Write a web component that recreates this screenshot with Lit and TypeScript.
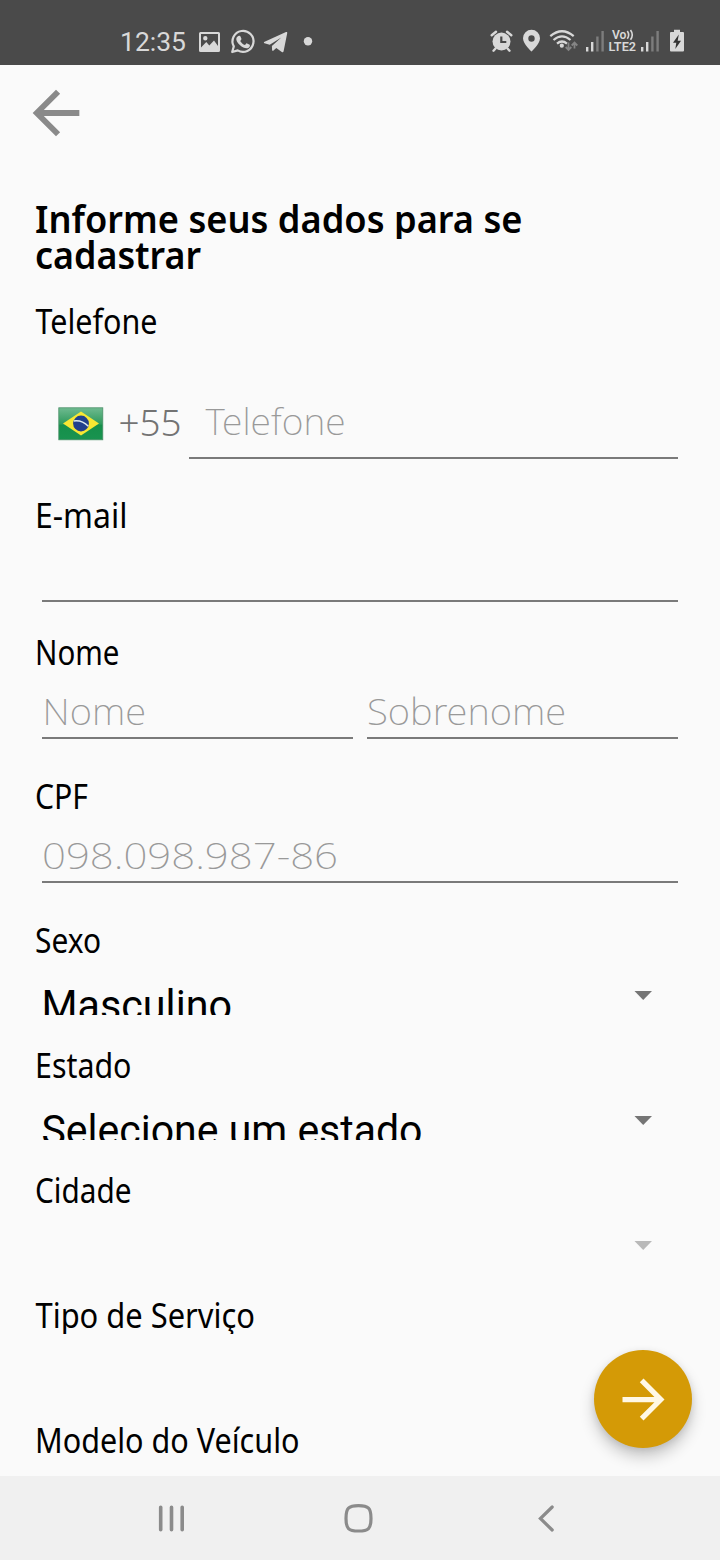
import { LitElement, html, svg, css, nothing } from "lit";
import { customElement, property } from "lit/decorators.js";

/** A single line of text fitted to a fixed advance width. */
@customElement("fit-line")
export class FitLine extends LitElement {
  @property() text = "";
  @property() kind = "label";
  @property({ type: Number }) x = 0;
  @property({ type: Number }) base = 30;
  @property({ type: Number }) height = 36;
  @property({ type: Number }) length = 0;
  @property({ type: Boolean }) clip = false;

  static styles = css`
    :host { display: block; }
    svg { display: block; width: 100%; overflow: visible; }
    svg.clip { overflow: hidden; }
    text { font-family: "Noto Sans", "Open Sans", sans-serif; }
    .title { font-size: 38.5px; font-weight: 560; fill: #000; }
    .label { font-size: 34px; font-weight: 380; fill: #000; }
    .hint { font-size: 37.5px; font-weight: 240; fill: #999; }
    .code { font-size: 37.5px; font-weight: 270; fill: #737373; }
    .value { font-family: Roboto, sans-serif; font-size: 42px; font-weight: 400; fill: #000; }
  `;

  render() {
    return html`<svg class=${this.clip ? "clip" : ""} height=${this.height}>
      <text class=${this.kind} x=${this.x} y=${this.base} textLength=${this.length} lengthAdjust="spacingAndGlyphs">${this.text}</text>
    </svg>`;
  }
}

@customElement("status-bar")
export class StatusBar extends LitElement {
  static styles = css`
    :host { display: flex; justify-content: space-between; height: 65px; background: #4a4a4a; }
    svg { display: block; }
    .ink { fill: #d8d8d8; }
    .dim { fill: #7d7d7d; }
    .line { fill: none; stroke: #d8d8d8; }
    .dark { fill: #333; }
    .clock { font: 400 26px Roboto, sans-serif; fill: #d8d8d8; }
    .net { font: 600 12.5px Roboto, sans-serif; fill: #d8d8d8; }
  `;

  private bars(x: number) {
    return svg`
      <rect class="ink" x=${x} y="47" width="2.4" height="4.500"/>
      <rect class="ink" x=${x + 5} y="42" width="2.4" height="9.500"/>
      <rect class="dim" x=${x + 10.2} y="36.500" width="2.4" height="15"/>
      <rect class="dim" x=${x + 15.4} y="31" width="2.4" height="20.500"/>`;
  }

  render() {
    return html`
      <svg width="340" height="65" viewBox="0 0 340 65">
        <text class="clock" x="120" y="51" textLength="66" lengthAdjust="spacingAndGlyphs">12:35</text>
        <path class="ink" fill-rule="evenodd" d="M200.500 32H218.500a1.500 1.500 0 0 1 1.500 1.500V50.500a1.500 1.500 0 0 1-1.500 1.500H200.500a1.500 1.500 0 0 1-1.500-1.500V33.500a1.500 1.500 0 0 1 1.500-1.500ZM201 34V47.500L206.300 42L209.300 45.500L214 40.500L218 46V34ZM205.300 36a2.200 2.200 0 1 1 0 4.400a2.200 2.200 0 0 1 0-4.400Z"/>
        <path class="line" stroke-width="2.200" stroke-linejoin="round" d="M232.200 52L233.800 46.400A10.500 10.500 0 1 1 237.700 50.400Z"/>
        <path class="ink" d="M239.200 35.700c.7 0 1 .1 1.300.8l.9 2.200c.2.500-.1.900-1.200 2.200c1.200 2 2.700 3.300 4.800 4.200c1.300-1.600 1.500-2 2.100-1.700l2.600 1.300c.5.300.3 3-2.200 3.500c-2 .5-5-.7-7.700-3.200c-2.700-2.500-3.700-4.700-3.500-6.300c.200-1.600 1.600-3 2.900-3Z"/>
        <path class="ink" d="M264.500 43.200c-.9-.4-.8-1.100.1-1.500L286 32.100c.9-.3 1.400.1 1.200 1.200l-3.600 17.900c-.3 1.200-1 1.300-1.800.7l-5.500-4l-2.800 2.700c-.5.500-1.400.4-1.400-.5l-.2-4.100l9.400-8.500l-11.600 7.300Z"/>
        <circle class="ink" cx="308" cy="41.300" r="4.200"/>
      </svg>
      <svg width="240" height="65" viewBox="480 0 240 65">
        <circle class="ink" cx="501.500" cy="41.500" r="9"/>
        <path class="line" stroke-width="2.400" stroke-linecap="round" d="M491.700 35.200L496 31.700M511.300 35.200L507 31.700M495.500 48.500L493.500 50.700M507.500 48.500L509.500 50.700"/>
        <path fill="none" stroke="#4a4a4a" stroke-width="2.200" d="M501.300 36.500V42H506.300"/>
        <path class="ink" fill-rule="evenodd" d="M531.500 29.800a8.500 8.500 0 0 1 8.500 8.500c0 6-8.500 13.200-8.500 13.200s-8.500-7.200-8.500-13.200a8.500 8.500 0 0 1 8.500-8.500Zm0 5.500a3.200 3.200 0 1 0 0 6.400a3.200 3.200 0 0 0 0-6.400Z"/>
        <path class="line" stroke-width="2.200" d="M550.300 36.200Q562 26.300 573.700 36.200M553.500 40Q562 32.600 570.500 40M557 43.600Q562 39.400 567 43.600"/>
        <circle class="ink" cx="561.800" cy="45.700" r="2.100"/>
        <path fill="none" stroke="#858585" stroke-width="1.800" d="M568.500 42.500V49.700M565.700 47L568.500 49.900L571.300 47M574.500 48.500V42.700M571.700 45.500L574.500 42.600L577.300 45.500"/>
        ${this.bars(586)}
        <text class="net" x="612" y="39" textLength="14.500" lengthAdjust="spacingAndGlyphs">Vo</text>
        <path class="line" stroke-width="1.600" d="M627.300 31Q630 34.800 627.300 38.800M630.500 30Q634 34.800 630.500 39.800"/>
        <text class="net" x="608.500" y="51.200" textLength="27.500" lengthAdjust="spacingAndGlyphs">LTE2</text>
        ${this.bars(641)}
        <path class="ink" d="M674 29.800H680V32H683a1 1 0 0 1 1 1V50.500a1 1 0 0 1-1 1H671a1 1 0 0 1-1-1V33a1 1 0 0 1 1-1H674Z"/>
        <path class="dark" d="M678.800 34.500L673 42.800H676.300L675.300 49L681 40.800H677.700Z"/>
      </svg>`;
  }
}

@customElement("app-root")
export class AppRoot extends LitElement {
  static styles = css`
    :host { display: block; position: relative; width: 720px; height: 1560px; overflow: hidden; background: #fafafa; }
    .screen { display: flex; flex-direction: column; height: 1560px; }
    svg { display: block; }
    .bar { height: 131px; box-sizing: border-box; padding: 13px 0 0 21px; }
    .form { flex: 1; min-height: 0; }
    .title { padding-bottom: 29px; }
    .phone { display: flex; height: 119px; margin-bottom: 39px; }
    .flag { padding: 67px 0 0 58px; }
    .code { width: 85px; padding-top: 66px; }
    .field { box-sizing: border-box; border-bottom: 2px solid #7a7a7a; }
    .tel { width: 489px; padding-top: 65px; }
    .email { height: 68px; margin: 0 42px 33px; }
    .names { display: flex; gap: 14px; margin: 0 42px 40px; }
    .names .field { flex: 1; }
    .short { height: 68px; padding-top: 20px; }
    .cpf { margin: 0 42px 40px; }
    .spinner { display: flex; height: 56px; margin-bottom: 33px; overflow: hidden; }
    .value { width: 634px; padding-top: 20px; }
    .caret { margin-top: 32.300px; fill: #757575; }
    .off { fill: #b9b9b9; }
    .nav { height: 84px; background: #f0f0f0; }
    .fab { position: absolute; left: 594px; top: 1350px; width: 98px; height: 98px; border-radius: 50%; background: #d49a06; display: grid; place-items: center; box-shadow: 0 9px 15px rgba(0, 0, 0, .2), 0 2px 7px rgba(0, 0, 0, .1); }
  `;

  private label(text: string, x: number, length: number, clip = false) {
    return html`<fit-line text=${text} .x=${x} .length=${length} .clip=${clip}></fit-line>`;
  }

  private spinner(value: string, length: number, caret: "on" | "off" | "none") {
    return html`<div class="spinner">
      <div class="value">${value
        ? html`<fit-line kind="value" text=${value} .x=${41.5} .base=${41.3} .height=${60} .length=${length}></fit-line>`
        : nothing}</div>
      ${caret === "none"
        ? nothing
        : html`<svg class="caret ${caret}" width="18" height="9"><path d="M.5 0H18L9.200 9Z"/></svg>`}
    </div>`;
  }

  render() {
    return html`
      <div class="screen">
        <status-bar></status-bar>
        <div class="form">
          <div class="bar">
            <svg width="70" height="70" viewBox="0 0 24 24"><path fill="#8a8a8a" d="M20 11H7.830l5.590-5.590L12 4l-8 8 8 8 1.410-1.410L7.830 13H20v-2z"/></svg>
          </div>
          <div class="title">
            <fit-line kind="title" text="Informe seus dados para se" .x=${35} .base=${37} .height=${43} .length=${487.5} .clip=${true}></fit-line>
            <fit-line kind="title" text="cadastrar" .x=${35} .base=${30} .length=${166}></fit-line>
          </div>
          ${this.label("Telefone", 35.5, 122)}
          <div class="phone">
            <div class="flag">
              <svg width="46" height="34" viewBox="0 0 46 34">
                <defs>
                  <linearGradient id="green" x1="0" y1="0" x2="0" y2="1">
                    <stop offset="0" stop-color="#6fba90"/><stop offset=".5" stop-color="#2f9a5c"/><stop offset=".55" stop-color="#158f4a"/><stop offset="1" stop-color="#199350"/>
                  </linearGradient>
                </defs>
                <rect x=".8" y=".8" width="44" height="32" fill="url(#green)" stroke="#4a8f68" stroke-width=".8"/>
                <path fill="#f7e733" d="M23 4.500L41 16.500L23 28.500L5 16.500Z"/>
                <circle cx="23" cy="16.500" r="7.900" fill="#22408c"/>
                <path fill="none" stroke="#dce8ee" stroke-width="1.500" d="M15.700 14Q24 12.800 30.300 19.300"/>
              </svg>
            </div>
            <div class="code"><fit-line kind="code" text="+55" .x=${14.5} .length=${63} .height=${40}></fit-line></div>
            <div class="field tel"><fit-line kind="hint" text="Telefone" .x=${16.5} .length=${140} .height=${40}></fit-line></div>
          </div>
          ${this.label("E-mail", 35, 92.5)}
          <div class="field email"></div>
          ${this.label("Nome", 35, 84.5)}
          <div class="names">
            <div class="field short"><fit-line kind="hint" text="Nome" .x=${0.5} .base=${34} .height=${40} .length=${103.5}></fit-line></div>
            <div class="field short"><fit-line kind="hint" text="Sobrenome" .x=${0} .base=${34} .height=${40} .length=${199}></fit-line></div>
          </div>
          ${this.label("CPF", 35, 53)}
          <div class="field short cpf"><fit-line kind="hint" text="098.098.987-86" .x=${0} .base=${34} .height=${40} .length=${296}></fit-line></div>
          ${this.label("Sexo", 35, 66)}
          ${this.spinner("Masculino", 190.5, "on")}
          ${this.label("Estado", 35, 96.5)}
          ${this.spinner("Selecione um estado", 381, "on")}
          ${this.label("Cidade", 35, 96.5)}
          ${this.spinner("", 0, "off")}
          ${this.label("Tipo de Serviço", 35.5, 219.5, true)}
          ${this.spinner("", 0, "none")}
          ${this.label("Modelo do Veículo", 35, 264.5)}
        </div>
        <div class="nav">
          <svg width="720" height="84" viewBox="0 1476 720 84" fill="none" stroke="#8b8b8b" stroke-width="3.600" stroke-linecap="round" stroke-linejoin="round">
            <path d="M160.700 1507.200V1529.800M171.500 1507.200V1529.800M182.200 1507.200V1529.800"/>
            <path stroke-width="3.200" d="M358.500 1505.700C368.500 1505.700 371 1508.200 371 1518.400S368.500 1531 358.500 1531S346 1528.600 346 1518.400S348.500 1505.700 358.500 1505.700Z"/>
            <path stroke-width="3.200" stroke-linejoin="miter" d="M552.200 1507L540.400 1518.500L552.200 1530"/>
          </svg>
        </div>
      </div>
      <div class="fab">
        <svg width="63" height="63" viewBox="0 0 24 24"><path fill="#fff8e6" d="M12 4l-1.410 1.410L16.170 11H4v2h12.170l-5.580 5.590L12 20l8-8z"/></svg>
      </div>`;
  }
}
